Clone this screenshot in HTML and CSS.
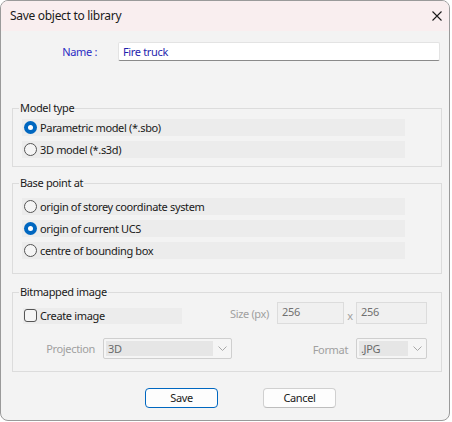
FILE: index.html
```html
<!DOCTYPE html>
<html>
<head>
<meta charset="utf-8">
<link rel="stylesheet" href="styles.css">
</head>
<body>
<div class="window">
  <div class="titlebar">
    <span class="title">Save object to library</span>
    <svg class="close" width="10" height="10" viewBox="0 0 10 10"><path d="M0.5 0.5 L9.5 9.5 M9.5 0.5 L0.5 9.5" stroke="#1a1a1a" stroke-width="1.1" fill="none"/></svg>
  </div>
  <div class="content">
    <div class="name-row">
      <span class="name-label">Name :</span>
      <div class="name-input">Fire truck</div>
    </div>

    <fieldset class="group g-model">
      <legend>Model type</legend>
      <div class="opt"><span class="radio on"></span>Parametric model (*.sbo)</div>
      <div class="opt"><span class="radio"></span>3D model (*.s3d)</div>
    </fieldset>

    <fieldset class="group g-base">
      <legend>Base point at</legend>
      <div class="opt"><span class="radio"></span>origin of storey coordinate system</div>
      <div class="opt"><span class="radio on"></span>origin of current UCS</div>
      <div class="opt"><span class="radio"></span>centre of bounding box</div>
    </fieldset>

    <fieldset class="group g-bitmap">
      <legend>Bitmapped image</legend>
      <div class="brow brow1">
        <div class="check-row"><span class="checkbox"></span>Create image</div>
        <span class="dlabel size-label">Size (px)</span>
        <div class="dinput w1">256</div>
        <span class="times">x</span>
        <div class="dinput w2">256</div>
      </div>
      <div class="brow brow2">
        <span class="dlabel proj-label">Projection</span>
        <div class="combo c1"><span class="combo-val">3D</span><svg class="chev" width="9" height="5" viewBox="0 0 9 5"><path d="M0.5 0.5 L4.5 4.5 L8.5 0.5" stroke="#a8a8a8" stroke-width="1" fill="none"/></svg></div>
        <span class="dlabel fmt-label">Format</span>
        <div class="combo c2"><span class="combo-val">.JPG</span><svg class="chev" width="9" height="5" viewBox="0 0 9 5"><path d="M0.5 0.5 L4.5 4.5 L8.5 0.5" stroke="#a8a8a8" stroke-width="1" fill="none"/></svg></div>
      </div>
    </fieldset>

    <div class="buttons">
      <div class="btn primary">Save</div>
      <div class="btn">Cancel</div>
    </div>
  </div>
</div>
</body>
</html>
```
FILE: styles.css
```css
html, body {
  margin: 0;
  padding: 0;
  background: #ffffff;
}
body {
  font-family: "Noto Sans", "Open Sans", sans-serif;
  font-size: 11px;
  letter-spacing: -0.35px;
  color: #1a1a1a;
}
.window {
  width: 450px;
  height: 421px;
  box-sizing: border-box;
  border: 1px solid #9a9a9a;
  border-radius: 8px;
  background: #f3f3f3;
  overflow: hidden;
  display: flex;
  flex-direction: column;
}
.titlebar {
  height: 30px;
  background: #f9eeef;
  display: flex;
  align-items: center;
  justify-content: space-between;
  padding-left: 9px;
  padding-right: 7px;
  flex-shrink: 0;
}
.title {
  font-size: 12px;
  letter-spacing: -0.3px;
  line-height: 16px;
  color: #1a1a1a;
}
.close {
  display: block;
}
.content {
  display: flex;
  flex-direction: column;
}
.name-row {
  display: flex;
  align-items: center;
  margin-top: 11px;
  height: 19px;
}
.name-label {
  width: 96px;
  text-align: right;
  color: #2b2bc4;
}
.name-input {
  margin-left: 21px;
  width: 322px;
  height: 19px;
  box-sizing: border-box;
  background: #ffffff;
  border: 1px solid #e3e3e3;
  border-bottom-color: #8a8a8a;
  border-radius: 2px;
  padding-left: 4px;
  color: #1f1fae;
  line-height: 17px;
}
.group {
  margin: 0 7px 0 11px;
  padding: 0;
  border: 1px solid #dcdcdc;
  min-width: 0;
  display: flex;
  flex-direction: column;
}
.group legend {
  margin-left: 6px;
  padding: 0 1px;
  line-height: 16px;
}
.g-model {
  margin-top: 39px;
  padding: 3px 0 8px 0;
  gap: 5px;
}
.g-base {
  margin-top: 8px;
  padding: 7px 0 14px 0;
  gap: 5px;
}
.g-bitmap {
  margin-top: 10px;
  padding: 2px 0 13px 0;
}
.opt {
  margin-left: 9px;
  width: 383px;
  height: 17px;
  box-sizing: border-box;
  padding-left: 2px;
  background: #ececec;
  display: flex;
  align-items: center;
  line-height: 17px;
}
.radio {
  width: 13px;
  height: 13px;
  box-sizing: border-box;
  border-radius: 50%;
  border: 1px solid #555555;
  background: #f5f5f5;
  margin-right: 3px;
  flex-shrink: 0;
  display: flex;
  align-items: center;
  justify-content: center;
}
.radio.on {
  border: none;
  background: #0067c0;
}
.radio.on::after {
  content: "";
  width: 5px;
  height: 5px;
  border-radius: 50%;
  background: #ffffff;
}
.brow {
  display: flex;
  align-items: center;
}
.brow1 {
  height: 22px;
}
.brow2 {
  margin-top: 14px;
  height: 20px;
}
.check-row {
  margin-left: 10px;
  width: 159px;
  height: 16px;
  margin-top: 5px;
  box-sizing: border-box;
  padding-left: 1px;
  background: #ececec;
  display: flex;
  align-items: center;
}
.checkbox {
  width: 13px;
  height: 13px;
  box-sizing: border-box;
  border: 1px solid #555555;
  border-radius: 3px;
  background: #f5f5f5;
  margin-right: 3px;
  flex-shrink: 0;
}
.dlabel {
  color: #a0a0a0;
  text-align: right;
  flex-shrink: 0;
}
.size-label {
  width: 87px;
  margin-right: 8px;
}
.dinput {
  height: 22px;
  box-sizing: border-box;
  border: 1px solid #dcdcdc;
  background: #f0f0f0;
  color: #707070;
  padding-left: 4px;
  line-height: 17px;
}
.w1 { width: 67px; }
.w2 { width: 71px; }
.times {
  width: 12px;
  text-align: center;
  color: #a0a0a0;
  margin-top: 5px;
}
.proj-label {
  width: 82px;
  margin-right: 8px;
}
.fmt-label {
  width: 116px;
  margin-right: 8px;
  margin-top: 3px;
}
.combo {
  height: 21px;
  box-sizing: border-box;
  border: 1px solid #cfcfcf;
  background: #f5f5f5;
  border-radius: 2px;
  display: flex;
  align-items: center;
  padding: 2px;
}
.c1 { width: 129px; }
.c2 { width: 71px; }
.combo-val {
  height: 15px;
  line-height: 15px;
  background: #e6e6e6;
  color: #6a6a6a;
  padding-left: 2px;
  flex: 1;
}
.c1 .combo-val { margin-right: 18px; }
.c2 .combo-val { margin-right: 18px; }
.chev {
  display: block;
  margin-right: 2px;
  flex-shrink: 0;
}
.combo .chev { margin-left: -13px; }
.buttons {
  display: flex;
  margin-top: 16px;
  padding-left: 144px;
  gap: 45px;
}
.btn {
  width: 73px;
  height: 20px;
  box-sizing: border-box;
  border: 1px solid #d0d0d0;
  border-bottom-color: #bdbdbd;
  border-radius: 4px;
  background: #fdfdfd;
  text-align: center;
  line-height: 18px;
  color: #1a1a1a;
}
.btn.primary {
  border: 1px solid #0067c0;
}
```
